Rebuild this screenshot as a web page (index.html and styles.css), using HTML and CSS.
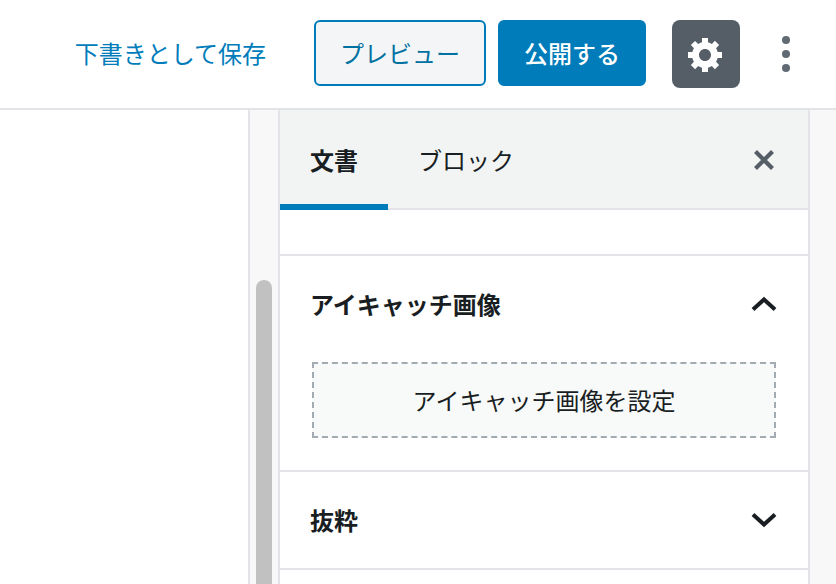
FILE: index.html
```html
<!DOCTYPE html>
<html lang="ja">
<head>
<meta charset="utf-8">
<title>編集</title>
<link rel="stylesheet" href="styles.css">
</head>
<body>
<header class="topbar">
  <a class="save-draft">下書きとして保存</a>
  <button class="btn btn-preview">プレビュー</button>
  <button class="btn btn-publish">公開する</button>
  <button class="settings" aria-label="設定">
    <svg width="40" height="40" viewBox="0 0 20 20"><path fill="#fff" d="M18 12h-2.18c-.17.7-.44 1.35-.81 1.93l1.54 1.54-2.1 2.1-1.54-1.54c-.58.36-1.23.63-1.91.79V19H8v-2.18c-.68-.16-1.33-.43-1.91-.79l-1.54 1.54-2.12-2.12 1.54-1.54c-.36-.58-.63-1.23-.79-1.91H1V9.03h2.17c.16-.7.44-1.35.8-1.94L2.43 5.55l2.1-2.1 1.54 1.54c.58-.37 1.24-.64 1.93-.81V2h3v2.18c.68.16 1.33.43 1.91.79l1.54-1.54 2.12 2.12-1.54 1.54c.36.59.64 1.24.8 1.94H18V12zm-8.5 1.5c1.66 0 3-1.34 3-3s-1.34-3-3-3-3 1.34-3 3 1.34 3 3 3z"/></svg>
  </button>
  <button class="more" aria-label="その他">
    <span class="dot"></span><span class="dot"></span><span class="dot"></span>
  </button>
</header>
<main class="workspace">
  <div class="editor"></div>
  <div class="gutter"><div class="thumb"></div></div>
  <aside class="sidebar">
    <div class="tabs">
      <div class="tab tab-active">文書</div>
      <div class="tab">ブロック</div>
      <button class="close" aria-label="閉じる">
        <svg width="24" height="24" viewBox="0 0 24 24"><path d="M3.5 3.5l17 17M20.5 3.5l-17 17" stroke="#555d66" stroke-width="4.2" fill="none"/></svg>
      </button>
    </div>
    <div class="section section-empty"></div>
    <section class="section">
      <div class="section-head">
        <h2 class="section-title">アイキャッチ画像</h2>
        <svg class="chevron" width="26" height="16" viewBox="0 0 26 16"><path d="M2 13.5l11-10 11 10" stroke="#191e23" stroke-width="4" fill="none"/></svg>
      </div>
      <div class="section-body">
        <button class="dropzone">アイキャッチ画像を設定</button>
      </div>
    </section>
    <section class="section">
      <div class="section-head">
        <h2 class="section-title">抜粋</h2>
        <svg class="chevron" width="26" height="16" viewBox="0 0 26 16"><path d="M2 2.5l11 10 11-10" stroke="#191e23" stroke-width="4" fill="none"/></svg>
      </div>
    </section>
  </aside>
  <div class="rest"></div>
</main>
</body>
</html>
```

FILE: styles.css
```css
* { box-sizing: border-box; }
html, body { height: 100%; }
body {
  margin: 0;
  overflow: hidden;
  background: #fff;
  color: #191e23;
  font-family: "Noto Sans CJK JP", "Noto Sans", sans-serif;
  font-size: 24px;
  display: flex;
  flex-direction: column;
}
button { font: inherit; padding: 0; margin: 0; }

.topbar {
  height: 110px;
  flex: none;
  display: flex;
  align-items: flex-start;
  justify-content: flex-end;
  padding-top: 20px;
  border-bottom: 2px solid #e2e4e7;
}
.save-draft {
  color: #007cba;
  line-height: 66px;
  margin-right: 48px;
}
.btn {
  height: 66px;
  padding-bottom: 2px;
  border-radius: 6px;
  border: 2px solid #007cba;
}
.btn-preview {
  width: 172px;
  margin-right: 12px;
  background: #f3f5f6;
  color: #0071a1;
}
.btn-publish {
  width: 148px;
  margin-right: 26px;
  background: #007cba;
  color: #fff;
  font-weight: 500;
}
.settings {
  width: 68px;
  height: 68px;
  border: 0;
  border-radius: 8px;
  background: #555d66;
  display: flex;
  align-items: center;
  justify-content: center;
}
.more {
  width: 92px;
  height: 68px;
  margin-right: 4px;
  border: 0;
  background: none;
  display: flex;
  flex-direction: column;
  align-items: center;
  justify-content: center;
  gap: 6px;
}
.dot {
  width: 8px;
  height: 8px;
  border-radius: 50%;
  background: #606a73;
}

.workspace {
  flex: 1;
  min-height: 0;
  display: flex;
}
.editor {
  width: 250px;
  flex: none;
  border-right: 2px solid #e2e4e7;
}
.gutter {
  width: 28px;
  flex: none;
  background: #f8f8f8;
  padding: 170px 6px 0;
}
.thumb {
  height: 100%;
  background: #c1c1c1;
  border-radius: 8px 8px 0 0;
}
.sidebar {
  width: 532px;
  flex: none;
  border-left: 2px solid #e2e4e7;
  border-right: 2px solid #e2e4e7;
  background: #fff;
}
.rest {
  flex: 1;
  background: #f8f8f8;
}

.tabs {
  height: 100px;
  display: flex;
  align-items: stretch;
  background: #f2f4f4;
  border-bottom: 2px solid #e2e4e7;
}
.tab {
  padding: 0 30px;
  margin-bottom: -2px;
  line-height: 100px;
  height: 100px;
}
.tab-active {
  font-weight: 700;
  border-bottom: 6px solid #007cba;
}
.close {
  margin-left: auto;
  margin-right: 32px;
  align-self: center;
  margin-top: 2px;
  width: 24px;
  height: 24px;
  border: 0;
  background: none;
  display: flex;
}

.section { border-bottom: 2px solid #e2e4e7; }
.section-empty { height: 46px; }
.section-head {
  height: 96px;
  padding: 0 31px 0 30px;
  display: flex;
  align-items: center;
  justify-content: space-between;
}
.section-title {
  margin: 0 0 2px;
  font-size: 24px;
  font-weight: 700;
}
.section-body { padding: 10px 32px 32px; }
.dropzone {
  display: block;
  width: 100%;
  height: 76px;
  padding-bottom: 2px;
  border: 2px dashed #a2aab2;
  background: #f8f9f9;
  color: #191e23;
}
```
